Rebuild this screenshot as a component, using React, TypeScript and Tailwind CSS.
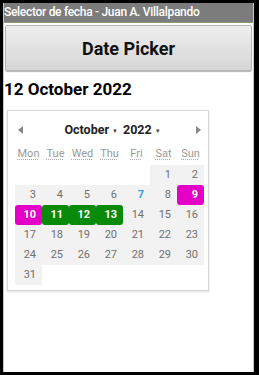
import React from "react";

const font = { fontFamily: "Roboto, 'Noto Sans', Arial, sans-serif" };

type Cell = { d?: number; kind?: "pink" | "green" | "today" | "normal" };

const weeks: Cell[][] = [
  [{}, {}, {}, {}, {}, { d: 1 }, { d: 2 }],
  [{ d: 3 }, { d: 4 }, { d: 5 }, { d: 6 }, { d: 7, kind: "today" }, { d: 8 }, { d: 9, kind: "pink" }],
  [{ d: 10, kind: "pink" }, { d: 11, kind: "green" }, { d: 12, kind: "green" }, { d: 13, kind: "green" }, { d: 14 }, { d: 15 }, { d: 16 }],
  [{ d: 17 }, { d: 18 }, { d: 19 }, { d: 20 }, { d: 21 }, { d: 22 }, { d: 23 }],
  [{ d: 24 }, { d: 25 }, { d: 26 }, { d: 27 }, { d: 28 }, { d: 29 }, { d: 30 }],
  [{ d: 31 }, {}, {}, {}, {}, {}, {}],
];

function DayCell({ c }: { c: Cell }) {
  if (!c.d) return <div className="h-[20px]" />;
  if (c.kind === "pink")
    return (
      <div className="h-[20px] bg-[#f2f2f2]">
        <div className="h-full rounded-[3px] bg-[#e400c6] text-white font-bold text-[11px] flex items-center justify-end pr-[6px]">
          {c.d}
        </div>
      </div>
    );
  if (c.kind === "green")
    return (
      <div className="h-[20px] bg-[#f2f2f2]">
        <div className="h-full rounded-[3px] bg-[#0a8a0a] text-white font-bold text-[11px] flex items-center justify-end pr-[6px]">
          {c.d}
        </div>
      </div>
    );
  if (c.kind === "today")
    return (
      <div className="h-[20px] bg-[#f2f2f2] text-[#3a9ee0] font-bold text-[11px] flex items-center justify-end pr-[6px]">
        {c.d}
      </div>
    );
  return (
    <div className="h-[20px] bg-[#f2f2f2] text-[#707070] text-[11px] flex items-center justify-end pr-[6px]">
      {c.d}
    </div>
  );
}

export default function App() {
  const days = ["Mon", "Tue", "Wed", "Thu", "Fri", "Sat", "Sun"];
  return (
    <div className="w-[259px] h-[375px] bg-black pt-[3px] pl-[3px] pr-[5px] pb-[3px]" style={font}>
      <div className="h-full bg-white border-l border-r border-[#c8c8c8] flex flex-col">
        <div className="h-[20px] bg-[#7c7c7c] border-b border-[#8a9a6a] text-white text-[12px] font-medium leading-[19px] whitespace-nowrap overflow-hidden tracking-[-0.3px]">
          Selector de fecha - Juan A. Villalpando
        </div>
        <div className="px-[1px] pt-[2px]">
          <div className="h-[46px] rounded-[2px] border border-[#b5b5b5] bg-gradient-to-b from-[#eeeeee] to-[#d6d6d6] shadow-[0_1px_1px_rgba(0,0,0,0.3)] flex items-center justify-center text-[18px] font-bold text-[#111]">
            Date Picker
          </div>
        </div>
        <div className="pt-[7px] text-[17px] font-bold text-black leading-[22px]">
          12 October 2022
        </div>
        <div className="pl-[3px] pt-[10px]">
          <div className="w-[202px] border border-[#d8d8d8] shadow-[0_1px_2px_rgba(0,0,0,0.15)] pl-[7px] pr-[4px] pt-[8px] pb-[5px]">
            <div className="h-[22px] flex items-center justify-between px-[3px] text-[#888]">
              <svg width="6" height="8" viewBox="0 0 6 8"><path d="M5 0 L0 4 L5 8 Z" fill="#888" /></svg>
              <div className="flex items-center gap-[5px] text-[12.5px] font-bold text-[#222] pl-[6px]">
                <span className="flex items-center gap-[3px]">October<span className="text-[6px] text-[#444]">▼</span></span>
                <span className="flex items-center gap-[3px]">2022<span className="text-[6px] text-[#444]">▼</span></span>
              </div>
              <svg width="6" height="8" viewBox="0 0 6 8"><path d="M1 0 L6 4 L1 8 Z" fill="#888" /></svg>
            </div>
            <div className="grid grid-cols-7 h-[20px] mt-[3px] items-center">
              {days.map((d) => (
                <div key={d} className="text-center text-[11px] text-[#9a9a9a]">
                  <span className="underline decoration-dotted decoration-[#aaa] underline-offset-[2px]">{d}</span>
                </div>
              ))}
            </div>
            <div className="mt-[1px] flex flex-col">
              {weeks.map((w, i) => (
                <div key={i} className="grid grid-cols-7">
                  {w.map((c, j) => (
                    <DayCell key={j} c={c} />
                  ))}
                </div>
              ))}
            </div>
          </div>
        </div>
      </div>
    </div>
  );
}
